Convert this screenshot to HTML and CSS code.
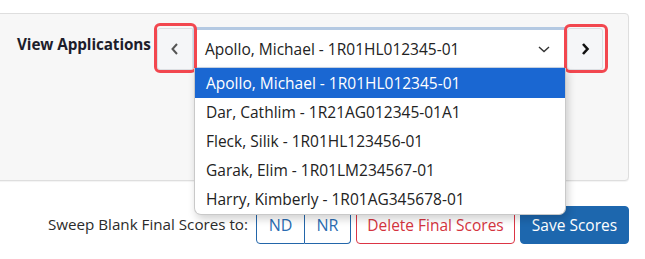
FILE: index.html
```html
<!DOCTYPE html>
<html>
<head>
<meta charset="utf-8">
<link rel="stylesheet" href="styles.css">
</head>
<body>
<div class="panel">
  <div class="row">
    <label class="label">View Applications</label>
    <div class="picker">
      <button class="nav prev"><svg width="12" height="14" viewBox="0 0 12 14"><path d="M8 2 L3.5 7 L8 12" fill="none" stroke="#555" stroke-width="2"/></svg></button>
      <div class="select">
        <span>Apollo, Michael - 1R01HL012345-01</span>
        <svg class="caret" width="14" height="10" viewBox="0 0 14 10"><path d="M2 3 L7 7.5 L12 3" fill="none" stroke="#333" stroke-width="1.4"/></svg>
      </div>
      <button class="nav next"><svg width="12" height="14" viewBox="0 0 12 14"><path d="M4 2 L8.5 7 L4 12" fill="none" stroke="#111" stroke-width="2.6"/></svg></button>
      <div class="hl hl-prev"></div>
      <div class="hl hl-next"></div>
      <ul class="menu">
        <li class="active">Apollo, Michael - 1R01HL012345-01</li>
        <li>Dar, Cathlim - 1R21AG012345-01A1</li>
        <li>Fleck, Silik - 1R01HL123456-01</li>
        <li>Garak, Elim - 1R01LM234567-01</li>
        <li>Harry, Kimberly - 1R01AG345678-01</li>
      </ul>
    </div>
  </div>
</div>
<div class="actions">
  <span class="sweep">Sweep Blank Final Scores to:</span>
  <div class="group">
    <button class="btn outline-blue first">ND</button>
    <button class="btn outline-blue last">NR</button>
  </div>
  <button class="btn outline-red">Delete Final Scores</button>
  <button class="btn primary">Save Scores</button>
</div>
</body>
</html>
```

FILE: styles.css
```css
* { box-sizing: border-box; }
body {
  margin: 0;
  background: #fff;
  font-family: "Open Sans", "Noto Sans", sans-serif;
  font-size: 15px;
  color: #212529;
  width: 645px;
  height: 259px;
  overflow: hidden;
}
.panel {
  margin-top: 13px;
  margin-left: -10px;
  width: 639px;
  height: 168px;
  background: #f7f7f7;
  border: 1px solid #dedede;
  border-radius: 4px;
  box-shadow: 0 1px 1px rgba(0,0,0,0.05);
}
.row {
  display: flex;
  align-items: flex-start;
  padding: 13px 0 0 26px;
}
.label {
  font-weight: 700;
  font-size: 15.3px;
  letter-spacing: -0.1px;
  color: #1d1d2b;
  padding-top: 7px;
  width: 140px;
  white-space: nowrap;
}
.picker {
  position: relative;
  display: flex;
  align-items: flex-start;
}
.nav {
  width: 36px;
  height: 42px;
  margin-top: 1px;
  border: 1px solid #dcdfe3;
  background: #f5f6f8;
  border-radius: 3px;
  display: flex;
  align-items: center;
  justify-content: center;
  padding: 0;
}
.prev { border-radius: 3px 0 0 3px; }
.next { margin-left: 2px; }
.select {
  width: 372px;
  height: 41px;
  background: #fff;
  border: 1px solid #c9d6e6;
  border-top: 3px solid #b4c9e2;
  border-left: 2px solid #c3d3e6;
  display: flex;
  align-items: center;
  justify-content: space-between;
  padding: 0 13px 0 10px;
  font-size: 15.5px;
  color: #222;
}
.caret { margin-top: 1px; }
.hl {
  position: absolute;
  border: 3px solid #f2474f;
  border-radius: 6px;
  pointer-events: none;
}
.hl-prev { left: -3px; top: -4px; width: 43px; height: 50px; }
.hl-next { left: 407px; top: -3px; width: 44px; height: 49px; }
.menu {
  position: absolute;
  left: 37px;
  top: 41px;
  width: 372px;
  margin: 0;
  padding: 0;
  list-style: none;
  background: #fff;
  border: 1px solid #c9c9c9;
  border-top: none;
  border-radius: 0 0 7px 7px;
  box-shadow: 2px 4px 8px rgba(0,0,0,0.18);
  overflow: hidden;
  z-index: 5;
}
.menu li {
  height: 29px;
  line-height: 29px;
  padding-left: 11px;
  font-size: 15.5px;
  color: #222;
  white-space: nowrap;
}
.menu li.active {
  height: 30px;
  line-height: 30px;
  background: #1a67d2;
  color: #fff;
}
.actions {
  display: flex;
  align-items: center;
  justify-content: flex-end;
  padding-right: 16px;
  margin-top: 25px;
}
.sweep {
  font-size: 15.2px;
  color: #2b2b2b;
  margin-right: 8px;
  margin-top: -2px;
  white-space: nowrap;
}
.group { display: flex; margin-right: 5px; }
.btn {
  font-family: inherit;
  font-size: 15.5px;
  height: 37px;
  padding: 0;
  border-radius: 4px;
  background: transparent;
  cursor: pointer;
  white-space: nowrap;
}
.outline-blue {
  border: 1px solid #2366aa;
  color: #2a6cb2;
  font-size: 16px;
}
.group .first { width: 49px; border-radius: 4px 0 0 4px; }
.group .last { width: 46px; border-radius: 0 4px 4px 0; border-left: none; }
.outline-red {
  border: 1px solid #dc3545;
  color: #d4343e;
  width: 159px;
  margin-right: 5px;
}
.primary {
  border: 1px solid #1d67ae;
  background: #1d67ae;
  color: #fff;
  width: 109px;
  height: 38px;
}
```
